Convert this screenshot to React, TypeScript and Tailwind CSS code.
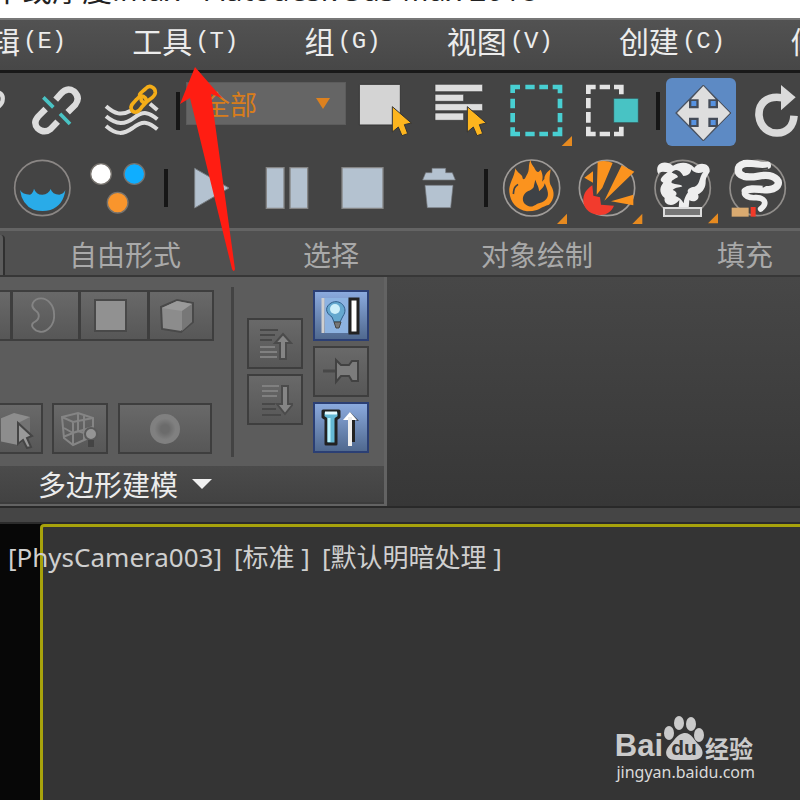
import type { ReactNode } from "react";

const cjk = "font-['Noto_Sans_CJK_SC',sans-serif]";

function ToolButton({ label, className, children }: { label: string; className: string; children?: ReactNode }) {
  return (
    <button type="button" aria-label={label} title={label} className={`block h-full shrink-0 ${className}`}>
      {children}
    </button>
  );
}

function Divider({ className }: { className: string }) {
  return <div className={`h-[38px] w-1 shrink-0 bg-[#161616] ${className}`} />;
}

function Cursor({ x, y }: { x: number; y: number }) {
  return (
    <path
      transform={`translate(${x} ${y})`}
      d="M0 0 L57 49 L36 54 L46 81 L29 87 L18 61 L0 76 Z"
      fill="#fdb51e"
      stroke="#333"
      strokeWidth="3"
    />
  );
}

const menus = [
  { name: "编辑", key: "(E)", className: "-ml-[40px]" },
  { name: "工具", key: "(T)", className: "ml-[66px]" },
  { name: "组", key: "(G)", className: "ml-[66px]" },
  { name: "视图", key: "(V)", className: "ml-[66px]" },
  { name: "创建", key: "(C)", className: "ml-[66px]" },
  { name: "修改器", key: "(M)", className: "ml-[66px]" },
];

function MenuBar() {
  return (
    <nav className="flex h-[55px] overflow-hidden border-t-2 border-b-[3px] border-t-[#777] border-b-[#191919] bg-linear-to-b from-[#525252] to-[#474747]">
      {menus.map((m) => (
        <button
          key={m.name}
          type="button"
          className={`flex h-10 shrink-0 items-end gap-[3px] whitespace-nowrap text-[#ececec] ${m.className}`}
        >
          <span className={`text-[30px] leading-10 ${cjk}`}>{m.name}</span>
          <span className="font-['Liberation_Mono',monospace] text-2xl leading-9">{m.key}</span>
        </button>
      ))}
    </nav>
  );
}

function MainRow() {
  return (
    <div className="flex h-[68px] items-start">
      <ToolButton label="选择并链接" className="w-2">
        <svg viewBox="0 24 24 204" className="h-full w-full">
          <path d="M-8 66 Q10 72 8 88 Q8 102 -8 112" fill="none" stroke="#dcdcdc" strokeWidth="13" />
        </svg>
      </ToolButton>
      <ToolButton label="取消链接" className="ml-[22px] w-[54px]">
        <svg viewBox="90 24 162 204" className="h-full w-full" fill="none">
          <path d="M167 89 L181 73 Q200 50 222 64 Q242 83 226 104 L203 127" stroke="#dcdcdc" strokeWidth="19" />
          <path d="M137 117 L115 139 Q98 158 113 175 Q133 192 152 177 L173 155" stroke="#dcdcdc" strokeWidth="19" />
          <path d="M130 82 L160 112 M180 131 L210 162" stroke="#49c3c4" strokeWidth="11" />
        </svg>
      </ToolButton>
      <ToolButton label="绑定到空间扭曲" className="ml-[18px] w-[60px]">
        <svg viewBox="306 24 180 204" className="h-full w-full" fill="none">
          <g stroke="#dcdcdc" strokeWidth="12">
            <path d="M318 109 C345 133 365 137 392 122 M450 101 L472 120" />
            <path d="M318 139 C350 166 375 164 404 142 C430 122 448 127 472 148" />
            <path d="M318 168 C350 196 370 193 398 174 C430 149 448 157 472 178" />
          </g>
          <g stroke="#f4ad18" strokeWidth="11">
            <path d="M423 85 C412 71 425 68 437 56 C449 42 467 53 466 68 C464 82 449 86 442 94 C435 102 423 97 423 85 Z" />
            <path d="M434 82 C447 96 432 102 424 113 C414 129 400 130 394 118 C389 106 401 98 410 88 C418 78 428 75 434 82 Z" />
          </g>
        </svg>
      </ToolButton>
      <Divider className="mt-[14px] ml-[14px]" />
      <div className="relative mt-1 ml-[6px] w-40 shrink-0">
        <label htmlFor="selection-filter" className="sr-only">
          选择过滤器
        </label>
        <select
          id="selection-filter"
          className={`h-[43px] w-full appearance-none border border-[#5c5c5c] bg-[#656565] pl-4 text-[27px] leading-9 text-[#d87d1b] ${cjk}`}
        >
          <option>全部</option>
        </select>
        <svg viewBox="0 0 14 11" className="pointer-events-none absolute top-4 right-4 h-[11px] w-[14px]">
          <path d="M0 0H14L7 11Z" fill="#dc811f" />
        </svg>
      </div>
      <ToolButton label="选择对象" className="ml-[10px] w-14">
        <svg viewBox="288 24 168 204" className="h-full w-full">
          <path d="M298 43H421V165H298Z" fill="#d4d4d4" stroke="#353535" strokeWidth="3" />
          <Cursor x={397} y={110} />
        </svg>
      </ToolButton>
      <ToolButton label="按名称选择" className="ml-[19px] w-[58px]">
        <svg viewBox="513 24 174 204" className="h-full w-full">
          <path
            d="M525 43H668V65H525ZM525 73H611V94H525ZM525 101H668V122H525ZM525 129H611V151H525Z"
            fill="#dedede"
            stroke="#353535"
            strokeWidth="2"
          />
          <Cursor x={622} y={110} />
        </svg>
      </ToolButton>
      <ToolButton label="矩形选择区域" className="ml-[17px] w-[68px]">
        <svg viewBox="-72 24 204 204" className="h-full w-full">
          <path
            d="M-52 69V51H-30M-14 51H14M28 51H54M68 51H90V70M90 86V115M90 129V157M90 172V192H68M54 192H28M14 192H-14M-30 192H-52V172M-52 157V129M-52 115V86"
            fill="none"
            stroke="#48cfd2"
            strokeWidth="14"
          />
          <path d="M126 198V228H95Z" fill="#e68a20" />
        </svg>
      </ToolButton>
      <ToolButton label="窗口/交叉" className="ml-[9px] w-[58px]">
        <svg viewBox="159 24 174 204" className="h-full w-full">
          <path
            d="M175 72V51H197M209 51H240M252 51H274V73M175 84V115M175 126V158M175 170V192H197M209 192H240M252 192H274V170"
            fill="none"
            stroke="#e4e4e4"
            strokeWidth="14"
          />
          <path d="M251 85H325V158H251Z" fill="#48c3c4" stroke="#35484a" strokeWidth="2" />
        </svg>
      </ToolButton>
      <Divider className="mt-[14px] ml-[15px]" />
      <ToolButton label="选择并移动" className="ml-[6px] w-[70px] rounded-md bg-[#5d8ac4]">
        <svg viewBox="408 24 210 204" className="h-full w-full">
          <path
            d="M520 45L603 129L520 213L437 129Z"
            fill="#444b57"
            stroke="#4a5260"
            strokeWidth="3"
          />
          <path
            d="M520 48L557 88H535V115H564V92L600 129L564 166V143H535V171H557L520 210L483 171H506V143H477V166L441 129L477 92V115H506V88H483Z"
            fill="#dedede"
          />
          <path d="M484 93H499V108H484ZM542 93H557V108H542ZM484 150H499V165H484ZM542 150H557V165H542Z" fill="#5792e0" />
        </svg>
      </ToolButton>
      <ToolButton label="选择并旋转" className="ml-[14px] w-[50px]">
        <svg viewBox="660 24 150 204" className="h-full w-full">
          <path d="M756 83 C710 76 685 101 687 137 C691 174 718 190 742 189 C770 188 790 169 792 137" fill="none" stroke="#dadada" strokeWidth="23" />
          <path d="M753 45L797 82L753 121Z" fill="#dadada" />
        </svg>
      </ToolButton>
    </div>
  );
}

function FlowRow() {
  return (
    <div className="mt-3 flex h-[66px] items-start">
      <ToolButton label="流体" className="ml-3 w-[60px]">
        <svg viewBox="36 264 180 198" className="h-full w-full">
          <circle cx="127" cy="354" r="83" fill="none" stroke="#8b8785" strokeWidth="5" />
          <path d="M60 360 Q68 374 90 374 Q99 370 102 356 Q108 374 127 374 Q146 373 152 357 Q157 374 178 374 Q191 372 196 360 Q190 407 151 420 Q127 427 101 419 Q66 405 60 360Z" fill="#29abe8" />
        </svg>
      </ToolButton>
      <ToolButton label="粒子" className="ml-[15px] w-[62px]">
        <svg viewBox="261 264 186 198" className="h-full w-full" stroke="#77736e" strokeWidth="4">
          <circle cx="303" cy="312" r="31" fill="#fff" />
          <circle cx="403" cy="312" r="31" fill="#0faeff" />
          <circle cx="353" cy="398" r="31" fill="#f9952c" />
        </svg>
      </ToolButton>
      <Divider className="mt-[11px] ml-[15px]" />
      <ToolButton label="播放" className="ml-[22px] w-[42px]">
        <svg viewBox="570 264 126 198" className="h-full w-full">
          <path d="M584 295L687 354L584 414Z" fill="#b4c2d0" stroke="#777c80" strokeWidth="3" />
        </svg>
      </ToolButton>
      <ToolButton label="暂停" className="ml-[31px] w-12">
        <svg viewBox="9 264 144 198" className="h-full w-full">
          <path d="M19 293H72V415H19ZM90 293H143V415H90Z" fill="#b4c2d0" stroke="#858585" strokeWidth="4" />
        </svg>
      </ToolButton>
      <ToolButton label="停止" className="ml-7 w-12">
        <svg viewBox="237 264 144 198" className="h-full w-full">
          <path d="M246 293H369V415H246Z" fill="#b4c2d0" stroke="#858585" strokeWidth="4" />
        </svg>
      </ToolButton>
      <ToolButton label="删除" className="ml-8 w-10">
        <svg viewBox="477 264 120 198" className="h-full w-full" fill="#b4c2d0" stroke="#75797d" strokeWidth="2">
          <path d="M516 295H557V308H577L586 330H488L497 308H516Z" />
          <path d="M495 346H579L572 413H502Z" />
        </svg>
      </ToolButton>
      <Divider className="mt-[11px] ml-[25px]" />
      <ToolButton label="火焰" className="ml-[13px] w-[68px]">
        <svg viewBox="3 9 204 198" className="h-full w-full">
          <circle cx="95" cy="99" r="84" fill="none" stroke="#a09c99" strokeWidth="5" />
          <path d="M92 14C82 34 92 42 79 62C74 75 68 76 67 65C63 57 51 52 46 40C44 65 25 88 28 111C31 143 50 164 81 169L97 168C118 165 125 155 147 149C164 132 164 111 154 94C145 80 150 60 152 43C142 50 133 60 133 72L126 80C131 62 125 51 122 44C112 58 108 48 102 37C97 28 92 25 92 14Z" fill="#fb931e" />
          <path d="M106 74C110 87 118 98 117 109C127 100 132 96 134 85C144 106 148 122 139 132C131 142 122 144 112 146C98 155 93 158 79 150C64 140 67 122 77 113C87 106 102 104 102 91Z" fill="#3e4246" />
          <path d="M54 88C40 98 42 104 40 117" fill="none" stroke="#3e4246" strokeWidth="5" />
          <path d="M201 176V207H171Z" fill="#e68a20" />
        </svg>
      </ToolButton>
      <ToolButton label="爆炸" className="ml-[7px] w-[68px]">
        <svg viewBox="228 9 204 198" className="h-full w-full">
          <circle cx="321" cy="99" r="83" fill="none" stroke="#a09c99" strokeWidth="5" />
          <path d="M293 21C309 16 326 18 338 24L307 98L290 119ZM365 31L403 50L313 137ZM253 68L279 49V83ZM400 119V151L333 139Z" fill="#fb931e" />
          <path d="M277 91L280 122L300 127L303 149L342 152C332 175 314 182 291 179C267 176 247 156 250 132C251 114 262 101 277 91Z" fill="#f23b2d" />
          <path d="M427 176V207H397Z" fill="#e68a20" />
        </svg>
      </ToolButton>
      <ToolButton label="烟雾" className="ml-[7px] w-[68px]">
        <svg viewBox="363 264 204 198" className="h-full w-full">
          <circle cx="458" cy="354" r="83" fill="none" stroke="#918e8b" strokeWidth="5" />
          <path d="M385 313C370 279 406 267 429 287C448 275 476 273 493 293C506 274 542 279 539 305C533 316 527 322 527 332C528 353 518 366 504 373C511 388 494 400 478 391L476 414H446L448 390C428 417 399 403 404 384C384 367 391 348 400 338C381 330 402 315 413 307C399 304 387 304 385 313Z" fill="#eee" />
          <path d="M425 308C436 294 450 300 460 318C478 317 482 308 484 298C492 310 508 312 520 306C506 322 512 342 494 350C478 352 470 359 474 367C466 378 462 388 461 400C455 389 448 382 436 378C443 372 440 364 428 360C438 351 450 353 457 349C452 341 438 345 425 339C422 330 436 327 444 321C441 312 433 311 425 308Z" fill="#424446" />
          <path d="M402 414H513V438H402Z" fill="#777" stroke="#ddd" strokeWidth="6" />
          <path d="M564 430V460H534Z" fill="#e68a20" />
        </svg>
      </ToolButton>
      <ToolButton label="香烟烟雾" className="ml-[7px] w-[68px]">
        <svg viewBox="588 264 204 198" className="h-full w-full">
          <circle cx="683" cy="354" r="83" fill="none" stroke="#918e8b" strokeWidth="5" />
          <g fill="none" stroke="#eee" strokeLinecap="round">
            <path d="M712 286C690 290 666 276 642 281C620 287 618 312 642 319C676 327 700 308 726 319C756 332 748 354 718 359C690 361 664 350 646 363" strokeWidth="22" />
            <path d="M646 363C636 378 660 384 676 383C704 382 714 400 692 417" strokeWidth="17" />
          </g>
          <path d="M650 294C672 290 690 300 714 294" fill="none" stroke="#444" strokeWidth="4" />
          <path d="M704 331C718 336 712 346 698 351" fill="none" stroke="#444" strokeWidth="4" />
          <path d="M605 413H656V440H605Z" fill="#d9aa70" />
          <path d="M662 411H677V440H662Z" fill="#f23a29" />
        </svg>
      </ToolButton>
    </div>
  );
}

const tabs = [
  { name: "自由形式", className: "ml-[64px]" },
  { name: "选择", className: "ml-[122px]" },
  { name: "对象绘制", className: "ml-[122px]" },
  { name: "填充", className: "ml-[124px]" },
];

function RibbonTabs() {
  return (
    <div role="tablist" className="flex h-[49px] items-start overflow-hidden border-t-[3px] border-b-2 border-t-[#646464] border-b-[#373737] bg-[#505050]">
      <div className="mt-1 h-11 w-[5px] shrink-0 rounded-tr border-r-2 border-[#303030] bg-[#5c5c5c]" />
      {tabs.map((t) => (
        <button
          key={t.name}
          type="button"
          role="tab"
          className={`h-[46px] shrink-0 text-[28px] leading-[46px] font-normal whitespace-nowrap text-[#a9a9a9] ${cjk} ${t.className}`}
        >
          {t.name}
        </button>
      ))}
    </div>
  );
}

function PanelButton({ label, active, className, children }: { label: string; active?: boolean; className: string; children?: ReactNode }) {
  const tone = active
    ? "border-[#2b3f74] from-[#8baade] to-[#50698f]"
    : "border-[#3e3e3e] from-[#696969] to-[#575757]";
  return (
    <button
      type="button"
      aria-label={label}
      title={label}
      className={`flex h-[51px] shrink-0 items-center justify-center border-2 bg-linear-to-b ${tone} ${className}`}
    >
      {children}
    </button>
  );
}

function ModelingPanel() {
  return (
    <section className="w-[387px] shrink-0 border-r-[3px] border-b-2 border-[#636363] bg-[#5c5c5c]">
      <div className="flex h-[189px] items-start pt-[13px]">
        <div className="flex h-[164px] w-[214px] flex-col justify-between overflow-hidden">
          <div className="flex">
            <PanelButton label="边" className="w-3 border-l-0" />
            <PanelButton label="边界" className="-ml-px w-[69px] pr-2">
              <svg viewBox="0 0 28 42" className="h-[40px] w-[26px]">
                <path d="M13 2C20 2 27 9 27 19C28 31 19 39 12 38C5 37 1 31 5 28C12 25 12 18 7 15C0 10 5 2 13 2Z" fill="none" stroke="#848484" strokeWidth="2" />
              </svg>
            </PanelButton>
            <PanelButton label="多边形" className="-ml-px w-[70px] pr-2">
              <span className="h-[33px] w-[33px] border-2 border-[#494949] bg-[#919191]" />
            </PanelButton>
            <PanelButton label="元素" className="-ml-px w-[66px] pr-2">
              <svg viewBox="0 0 36 36" className="h-9 w-9">
                <path d="M2 9L18 2L34 5V24L22 34L3 31Z" fill="#8c8c8c" stroke="#494949" strokeWidth="2" />
                <path d="M3 10L18 3L33 6L23 13Z" fill="#9a9a9a" />
                <path d="M23 13L33 6V24L23 33Z" fill="#777" />
              </svg>
            </PanelButton>
          </div>
          <div className="flex">
            <PanelButton label="选择元素" className="w-[43px] border-l-0">
              <svg viewBox="0 0 40 40" className="h-10 w-10">
                <path d="M-2 10L13 4L29 8V27L17 36L-2 32Z" fill="#8d8d8d" />
                <path d="M17 14L29 8V27L17 36Z" fill="#737373" />
                <path d="M17 14L31 27L26 29L30 38L26 39L22 31L17 35Z" fill="#999" stroke="#454545" strokeWidth="2" />
              </svg>
            </PanelButton>
            <PanelButton label="预览子对象" className="ml-[9px] w-14">
              <svg viewBox="0 0 40 40" className="h-10 w-10" fill="none" stroke="#858585" strokeWidth="2">
                <path d="M2 8L18 4L33 9V27L13 36L4 29ZM2 8L13 13L33 9M13 13V36M18 4V22L3 28M18 22L33 27M4 19L13 24L33 18M24 7V31" />
                <circle cx="31" cy="25" r="6" fill="#959595" stroke="#5a5a5a" />
                <path d="M31 31V38" stroke="#444" strokeWidth="6" />
              </svg>
            </PanelButton>
            <PanelButton label="软选择" className="ml-[10px] w-[94px]">
              <span className="h-[30px] w-[30px] rounded-full bg-radial from-[#6b6b6b] from-20% to-[#808080] to-50%" />
            </PanelButton>
          </div>
        </div>
        <div className="-mt-[3px] ml-[17px] h-[170px] w-[3px] bg-[#434343]" />
        <div className="mt-7 ml-[13px] flex flex-col gap-[5px]">
          <PanelButton label="上一修改器" className="w-14">
            <svg viewBox="0 0 36 36" className="h-9 w-9" strokeWidth="2">
              <path d="M3 4H21M3 9H18M3 14H15" stroke="#484848" />
              <path d="M3 21H18M3 26H20M3 31H20" stroke="#808080" />
              <path d="M26 8L34 17H29V33H23V17H18Z" fill="#858585" stroke="#4b4b4b" />
            </svg>
          </PanelButton>
          <PanelButton label="下一修改器" className="w-14">
            <svg viewBox="0 0 36 36" className="h-9 w-9" strokeWidth="2">
              <path d="M5 4H22M5 9H21M5 14H20" stroke="#808080" />
              <path d="M5 22H18M5 27H19M5 33H24" stroke="#484848" />
              <path d="M25 4H31V22H36L28 32L20 22H25Z" fill="#858585" stroke="#4b4b4b" />
            </svg>
          </PanelButton>
        </div>
        <div className="ml-[10px] flex flex-col gap-[5px]">
          <PanelButton label="显示最终结果" active className="w-14">
            <svg viewBox="0 0 42 40" className="h-10 w-[42px]">
              <path d="M3 2V37" stroke="#cfcfcf" strokeWidth="3" />
              <path d="M5 2H28V37H5Z" fill="#8db3e1" />
              <path d="M11 7C20 2 29 12 23 20L20 26H14L12 21C4 16 6 10 11 7Z" fill="#65a8cf" stroke="#315f8b" strokeWidth="1" />
              <circle cx="15" cy="13" r="5" fill="#cdeffa" />
              <path d="M14 26H21L19 32H16Z" fill="#777" stroke="#444" strokeWidth="1" />
              <path d="M30 3H38V37H30Z" fill="#fff" stroke="#222" strokeWidth="3" />
            </svg>
          </PanelButton>
          <PanelButton label="锁定堆栈" className="w-14">
            <svg viewBox="0 0 40 30" className="h-[30px] w-10">
              <path d="M2 14H16" stroke="#484848" strokeWidth="3" />
              <path d="M15 3L20 8H28L31 4H37V24H31L28 19H20L15 25Z" fill="#7c7c7c" stroke="#424242" strokeWidth="2" />
            </svg>
          </PanelButton>
          <PanelButton label="切换命令面板堆栈" active className="w-14">
            <svg viewBox="0 0 40 40" className="h-10 w-10">
              <path d="M2 3H18V9L15 11V36H5V11L2 9Z" fill="#65b9d5" stroke="#222" strokeWidth="3" strokeLinejoin="round" />
              <path d="M4 5H16" stroke="#e5faff" strokeWidth="3" />
              <path d="M8 10V34" stroke="#bcf4ff" strokeWidth="3" />
              <path d="M29 4L38 13L34 12V34H31V12Z" fill="#222" />
              <path d="M29 4L36 12H22Z" fill="#fff" />
              <path d="M29 9V38" stroke="#eee" strokeWidth="4" />
            </svg>
          </PanelButton>
        </div>
      </div>
      <button
        type="button"
        className={`flex h-[38px] w-full items-center gap-[14px] border-b-2 border-[#3c3c3c] bg-linear-to-b from-[#4b4b4b] to-[#424242] pl-[38px] text-[28px] leading-9 text-[#ececec] ${cjk}`}
      >
        多边形建模
        <svg viewBox="0 0 20 10" className="h-[10px] w-5">
          <path d="M0 0H20L10 10Z" fill="#f0f0f0" />
        </svg>
      </button>
    </section>
  );
}

function BaiduMark() {
  return (
    <div aria-label="Baidu 经验" className="absolute right-[45px] bottom-4 text-[#cacaca]">
      <div className="flex h-11 items-end pr-[2px]">
        <span className="font-['Liberation_Sans',sans-serif] text-[31px] leading-7 font-bold">Bai</span>
        <span className="relative block h-11 w-[42px]">
          <svg viewBox="0 0 40 44" className="h-full w-full" fill="currentColor">
            <ellipse cx="5" cy="17" rx="5" ry="7" />
            <ellipse cx="15" cy="7" rx="5" ry="7" />
            <ellipse cx="27" cy="8" rx="5" ry="7" />
            <ellipse cx="35" cy="19" rx="5" ry="7" />
            <path d="M20 17C27 16 30 24 35 29C42 37 38 44 29 44H11C3 44 -1 37 5 30C10 25 13 18 20 17Z" />
          </svg>
          <span className="absolute inset-x-0 bottom-0 text-center font-['Liberation_Sans',sans-serif] text-[21px] leading-6 font-bold text-[#343434]">
            du
          </span>
        </span>
        <span className={`text-2xl leading-6 font-bold ${cjk}`}>经验</span>
      </div>
      <a href="#jingyan" className="block text-right font-['Noto_Sans',sans-serif] text-base leading-6 text-[#dadada]">
        jingyan.baidu.com
      </a>
    </div>
  );
}

function Viewport() {
  return (
    <main className="relative grow border-t-2 border-[#2b2b2b] bg-[#070707] pl-10">
      <div className="h-full rounded-tl border-t-[3px] border-l-[3px] border-[#a7a20b] bg-[#343434]" />
      <div className="absolute top-3 left-2 flex gap-3 font-['Noto_Sans','Noto_Sans_CJK_SC',sans-serif] text-[26px] leading-[42px] whitespace-nowrap text-[#cfcfcf]">
        <button type="button">[PhysCamera003]</button>
        <button type="button">[标准 ]</button>
        <button type="button">[默认明暗处理 ]</button>
      </div>
      <BaiduMark />
    </main>
  );
}

export default function App() {
  return (
    <div className="relative flex h-screen flex-col overflow-hidden bg-[#444]">
      <header className="flex h-[18px] items-end overflow-hidden bg-white">
        <h1 className="mb-4 -ml-2 font-['Open_Sans','Noto_Sans_CJK_SC',sans-serif] text-[30px] leading-6 whitespace-pre text-[#222]">
          不或厚度.max - Autodesk 3ds Max 2018
        </h1>
      </header>
      <MenuBar />
      <div role="toolbar" aria-label="主工具栏" className="h-[155px] overflow-hidden bg-[#444] pt-[5px]">
        <MainRow />
        <FlowRow />
      </div>
      <RibbonTabs />
      <div className="flex h-[231px] items-stretch border-b-2 border-[#292929] bg-linear-to-b from-[#474747] to-[#373737]">
        <ModelingPanel />
      </div>
      <div className="h-[14px] bg-[#454545]" />
      <Viewport />
      <svg viewBox="0 0 56 206" className="pointer-events-none absolute top-[67px] left-[180px] h-[206px] w-14">
        <path d="M15 0L42 31L31 27L55 202Q54 206 52 202L10 31L0 37Z" fill="#ff1d12" />
      </svg>
    </div>
  );
}
